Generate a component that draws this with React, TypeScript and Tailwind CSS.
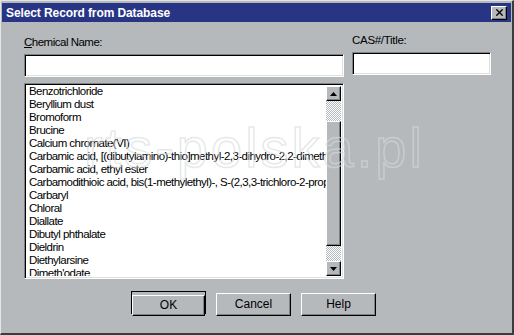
import { X } from "lucide-react";

const chemicals = [
  "Benzotrichloride",
  "Beryllium dust",
  "Bromoform",
  "Brucine",
  "Calcium chromate(VI)",
  "Carbamic acid, [(dibutylamino)-thio]methyl-2,3-dihydro-2,2-dimethyl",
  "Carbamic acid, ethyl ester",
  "Carbamodithioic acid, bis(1-methylethyl)-, S-(2,3,3-trichloro-2-propenyl)",
  "Carbaryl",
  "Chloral",
  "Diallate",
  "Dibutyl phthalate",
  "Dieldrin",
  "Diethylarsine",
  "Dimeth'odate",
];

const checker =
  "bg-[repeating-conic-gradient(#ffffff_0_25%,#b5b9bc_0_50%)] bg-[length:2px_2px]";

function ScrollArrow({ down }: { down?: boolean }) {
  return (
    <div className="h-[15px] w-[15px] bg-[#b5b9bc] border border-t-white border-l-white border-r-black border-b-black shadow-[inset_-1px_-1px_#7f8386] flex items-center justify-center">
      <svg width="7" height="4" viewBox="0 0 7 4">
        {down ? (
          <polygon points="0,0 7,0 3.5,4" fill="#000" />
        ) : (
          <polygon points="0,4 7,4 3.5,0" fill="#000" />
        )}
      </svg>
    </div>
  );
}

function Button({ label, def }: { label: string; def?: boolean }) {
  return (
    <div
      className={
        def
          ? "w-[75px] h-[23px] border border-black"
          : "w-[75px] h-[23px]"
      }
    >
      <button
        type="button"
        className="w-full h-full bg-[#b5b9bc] border border-t-white border-l-white border-r-black border-b-black shadow-[inset_-1px_-1px_#7f8386] text-[12px] text-black leading-none"
        style={{ fontFamily: '"Liberation Sans", Arial, sans-serif' }}
      >
        {label}
      </button>
    </div>
  );
}

export default function App() {
  return (
    <div
      className="relative w-[514px] h-[335px] overflow-hidden bg-[#b5b9bc] text-black"
      style={{ fontFamily: '"Liberation Sans", Arial, sans-serif' }}
    >
      {/* Window frame */}
      <div className="absolute inset-0 border-l border-t border-[#e4e6e6] border-r-[2px] border-b-[2px] border-r-[#3a3d40] border-b-[#3a3d40] p-[1px] pt-[2px] flex flex-col">
        {/* Title bar */}
        <div className="h-[19px] bg-[#283585] flex items-center justify-between pl-[4px] pr-[4px]">
          <span className="text-white font-bold text-[12px] tracking-[-0.1px]">
            Select Record from Database
          </span>
          <div className="w-[16px] h-[14px] bg-[#b5b9bc] border border-t-white border-l-white border-r-black border-b-black shadow-[inset_-1px_-1px_#7f8386] flex items-center justify-center">
            <X size={11} strokeWidth={3} color="#000" />
          </div>
        </div>

        {/* Body */}
        <div className="flex gap-[8px] pl-[22px] pt-[11px]">
          {/* Left column */}
          <div className="w-[320px] flex flex-col">
            <div className="h-[21px] pt-[3px] text-[11.5px] leading-[13px] tracking-[-0.5px]">
              <span className="underline">C</span>hemical Name:
            </div>
            <div className="h-[23px] bg-white border border-t-[#7f8386] border-l-[#7f8386] border-r-white border-b-white shadow-[inset_1px_1px_#000,inset_-1px_-1px_#dfe1e1]" />
            <div className="mt-[6px] h-[196px] bg-white border border-t-[#7f8386] border-l-[#7f8386] border-r-white border-b-white shadow-[inset_1px_1px_#000,inset_-1px_-1px_#dfe1e1] pl-[2px] pr-[2px] pt-[1px] pb-[2px] flex">
              <div className="flex-1 overflow-hidden pl-[2px]">
                {chemicals.map((c) => (
                  <div
                    key={c}
                    className="h-[13px] leading-[13px] text-[11.5px] whitespace-nowrap tracking-[-0.55px]"
                  >
                    {c}
                  </div>
                ))}
              </div>
              <div className="w-[15px] flex flex-col pt-[1px]">
                <ScrollArrow />
                <div className={`h-[20px] ${checker}`} />
                <div className="h-[125px] bg-[#b5b9bc] border border-t-white border-l-white border-r-black border-b-black shadow-[inset_-1px_-1px_#7f8386]" />
                <div className={`flex-1 ${checker}`} />
                <ScrollArrow down />
              </div>
            </div>
          </div>

          {/* Right column */}
          <div className="w-[139px] flex flex-col">
            <div className="h-[19px] pt-[1px] text-[11.5px] leading-[13px] tracking-[-0.3px]">
              CAS#/Title:
            </div>
            <div className="h-[23px] bg-white border border-t-[#7f8386] border-l-[#7f8386] border-r-white border-b-white shadow-[inset_1px_1px_#000,inset_-1px_-1px_#dfe1e1]" />
          </div>
        </div>

        {/* Buttons */}
        <div className="flex justify-center gap-[10px] mt-[12px] pr-[6px]">
          <Button label="OK" def />
          <Button label="Cancel" />
          <Button label="Help" />
        </div>
      </div>

      {/* Watermark */}
      <div className="absolute left-[84px] top-[120px] text-[56px] leading-none font-light text-transparent tracking-[3px] opacity-60 [-webkit-text-stroke:1.5px_#d8dadb] pointer-events-none select-none">
        rts-polska.pl
      </div>
    </div>
  );
}
